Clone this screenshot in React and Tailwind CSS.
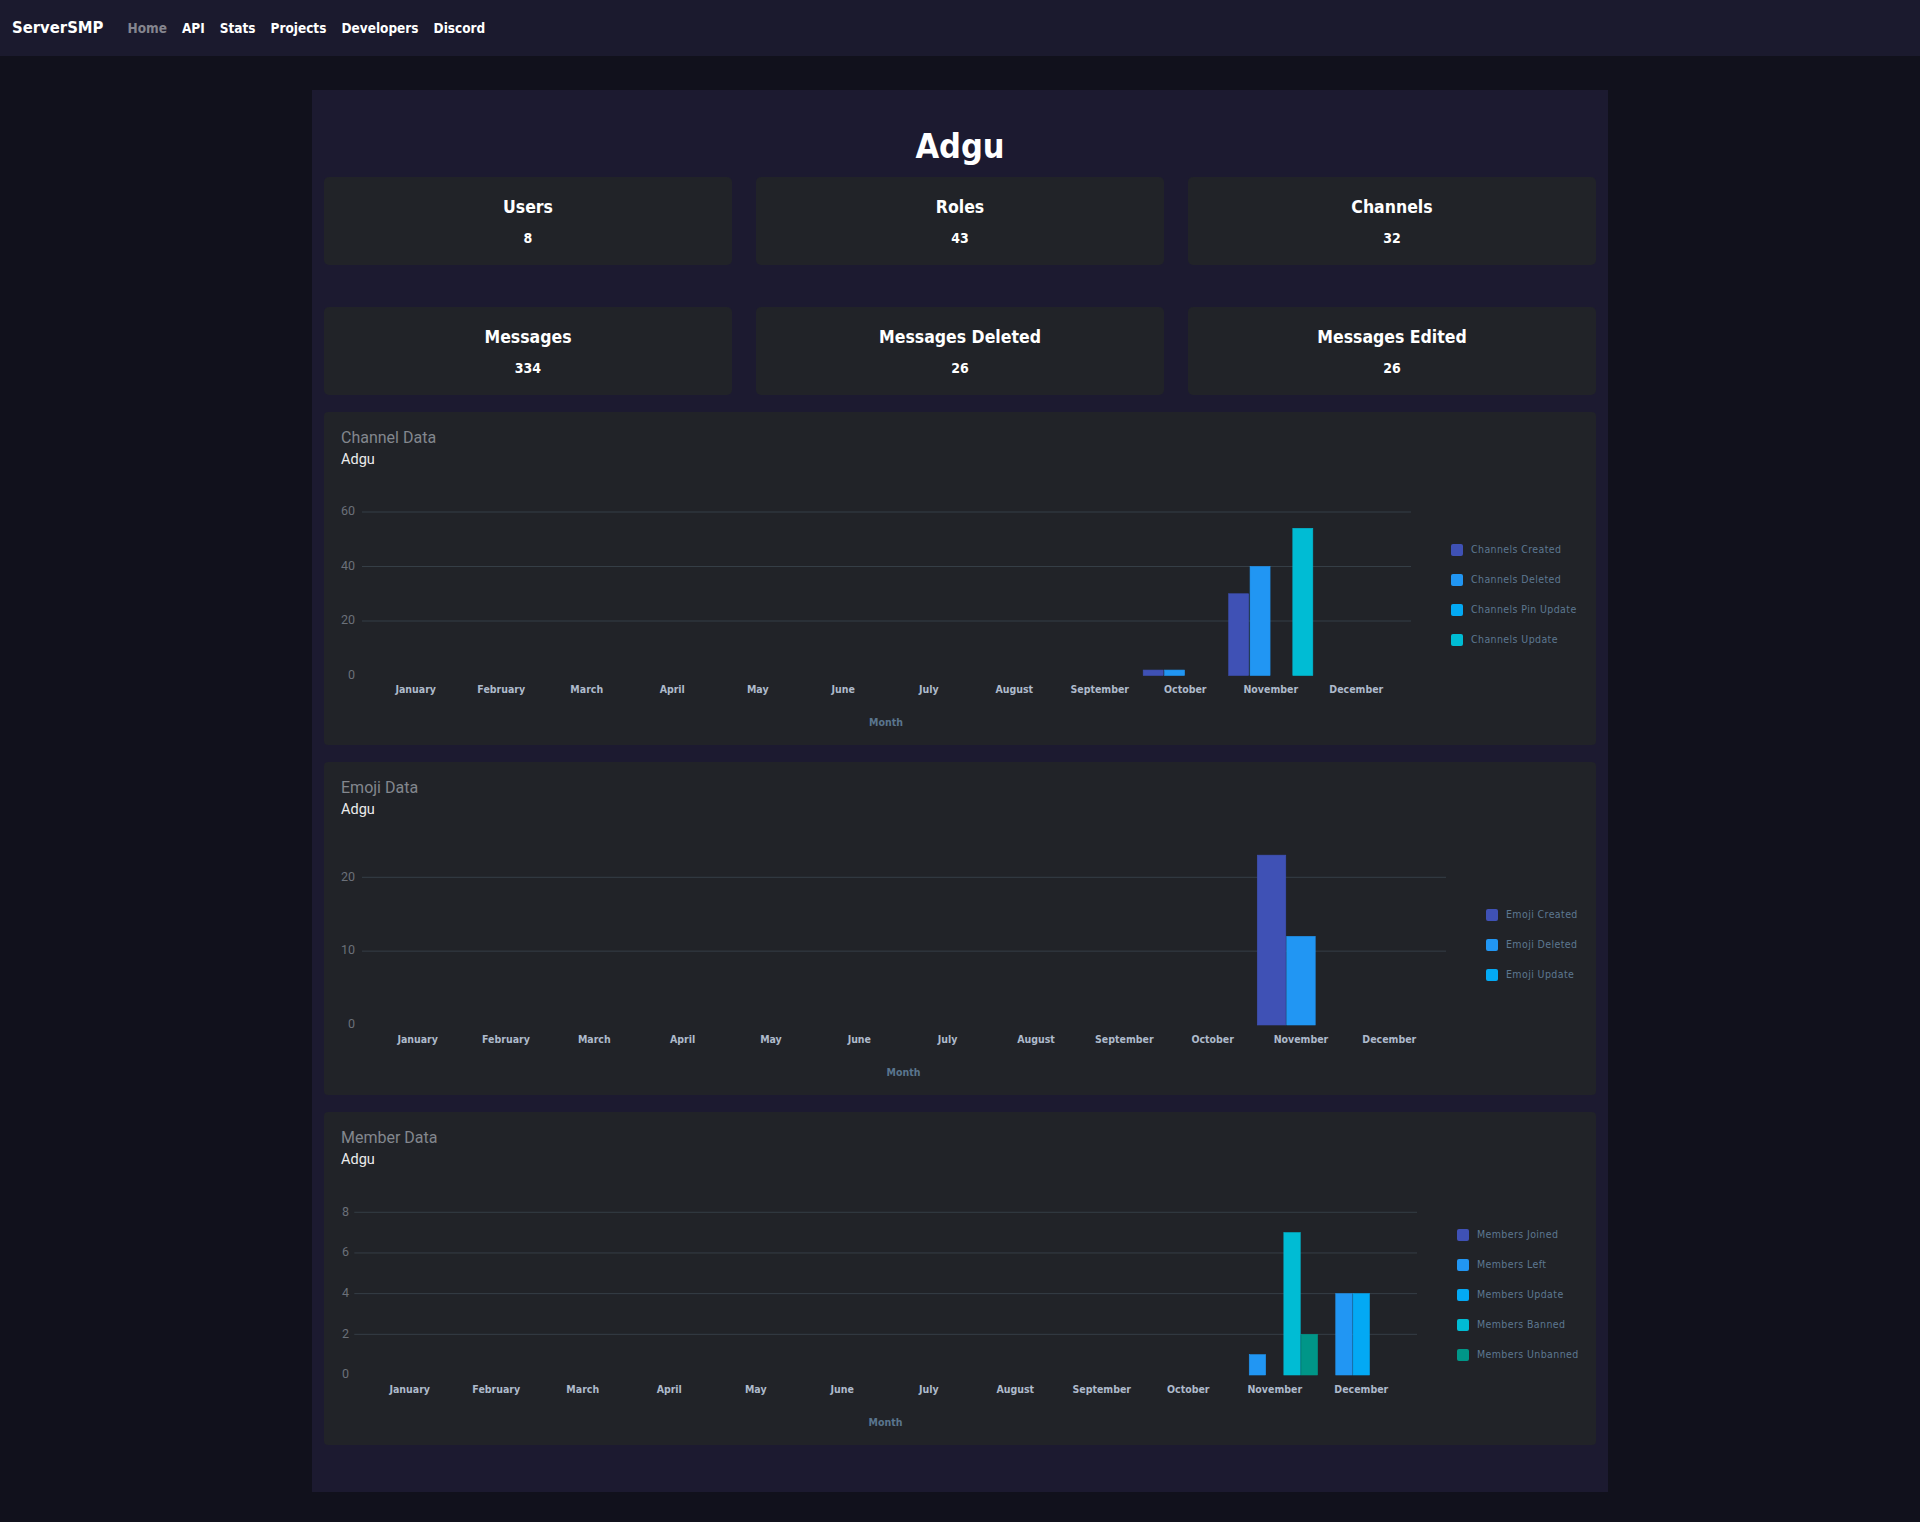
import React from "react";

const MONTHS = [
  "January",
  "February",
  "March",
  "April",
  "May",
  "June",
  "July",
  "August",
  "September",
  "October",
  "November",
  "December",
];

const zeros = () => Array(12).fill(0);
const withValues = (vals) => {
  const arr = zeros();
  Object.entries(vals).forEach(([k, v]) => (arr[k] = v));
  return arr;
};

const stats = [
  { label: "Users", value: 8 },
  { label: "Roles", value: 43 },
  { label: "Channels", value: 32 },
  { label: "Messages", value: 334 },
  { label: "Messages Deleted", value: 26 },
  { label: "Messages Edited", value: 26 },
];

const charts = [
  {
    title: "Channel Data",
    width: 1070,
    gridX0: 21,
    plotX0: 32,
    cat: 85.5,
    labelX: 14,
    ticks: [0, 20, 40, 60],
    unit: 2.725,
    base: 203.5,
    barW: 20,
    series: [
      { name: "Channels Created", color: "#3f51b5", data: withValues({ 9: 2, 10: 30 }) },
      { name: "Channels Deleted", color: "#2196f3", data: withValues({ 9: 2, 10: 40 }) },
      { name: "Channels Pin Update", color: "#03a9f4", data: zeros() },
      { name: "Channels Update", color: "#00bcd4", data: withValues({ 10: 54 }) },
    ],
  },
  {
    title: "Emoji Data",
    width: 1105,
    gridX0: 21,
    plotX0: 32.5,
    cat: 88.33,
    labelX: 14,
    ticks: [0, 10, 20],
    unit: 7.385,
    base: 203,
    barW: 28.5,
    series: [
      { name: "Emoji Created", color: "#3f51b5", data: withValues({ 10: 23 }) },
      { name: "Emoji Deleted", color: "#2196f3", data: withValues({ 10: 12 }) },
      { name: "Emoji Update", color: "#03a9f4", data: zeros() },
    ],
  },
  {
    title: "Member Data",
    width: 1076,
    gridX0: 13.3,
    plotX0: 25.5,
    cat: 86.5,
    labelX: 8,
    ticks: [0, 2, 4, 6, 8],
    unit: 20.34,
    base: 203,
    barW: 16.4,
    series: [
      { name: "Members Joined", color: "#3f51b5", data: zeros() },
      { name: "Members Left", color: "#2196f3", data: withValues({ 10: 1, 11: 4 }) },
      { name: "Members Update", color: "#03a9f4", data: withValues({ 11: 4 }) },
      { name: "Members Banned", color: "#00bcd4", data: withValues({ 10: 7 }) },
      { name: "Members Unbanned", color: "#009688", data: withValues({ 10: 2 }) },
    ],
  },
];

const BarChart = ({ chart }) => {
  const { width, gridX0, plotX0, cat, labelX, ticks, unit, base, barW, series } = chart;
  const slot = cat / series.length;
  const plotEnd = plotX0 + cat * 12;

  return (
    <svg width={width} height={270} className="shrink-0 font-['DejaVu_Sans_Condensed',sans-serif]">
      {ticks.map((t) => {
        const y = base - t * unit;
        return (
          <g key={t}>
            {t !== 0 && (
              <line x1={gridX0} x2={width} y1={y} y2={y} stroke="#353e46" strokeWidth="1" />
            )}
            <text
              x={labelX}
              y={y}
              textAnchor="end"
              dominantBaseline="middle"
              fill="#6b7079"
              fontSize="12.5"
              className="font-['Roboto',sans-serif]"
            >
              {t}
            </text>
          </g>
        );
      })}

      {series.map((s, si) =>
        s.data.map((v, mi) => {
          if (!v) return null;
          const x = plotX0 + mi * cat + si * slot + (slot - barW) / 2;
          const h = v * unit;
          return (
            <rect
              key={`${si}-${mi}`}
              x={x}
              y={base - h}
              width={barW}
              height={h}
              fill={s.color}
              stroke={s.color}
              strokeWidth="0.6"
            />
          );
        })
      )}

      {MONTHS.map((m, i) => (
        <text
          key={m}
          x={plotX0 + i * cat + cat / 2}
          y={218}
          textAnchor="middle"
          dominantBaseline="middle"
          fill="#aebacb"
          fontSize="10.5"
          fontWeight="700"
        >
          {m}
        </text>
      ))}

      <text
        x={(plotX0 + plotEnd) / 2}
        y={251}
        textAnchor="middle"
        dominantBaseline="middle"
        fill="#5a758e"
        fontSize="10.5"
        fontWeight="700"
      >
        Month
      </text>
    </svg>
  );
};

const ChartCard = ({ chart }) => (
  <div className="h-[333px] rounded-[4px] bg-[#212328] px-[17px] pt-[16px]">
    <div className="font-['Roboto',sans-serif] text-[16px] leading-[20px] text-[#83878e]">
      {chart.title}
    </div>
    <div className="mt-[2px] font-['Roboto',sans-serif] text-[14.5px] leading-[20px] text-[#ececec]">
      Adgu
    </div>
    <div className="mt-[2px] flex">
      <BarChart chart={chart} />
      <div className="ml-[40px] flex h-[246px] flex-col justify-center">
        {chart.series.map((s) => (
          <div key={s.name} className="flex h-[30px] items-center whitespace-nowrap">
            <span
              className="h-[12px] w-[12px] shrink-0 rounded-[2px]"
              style={{ backgroundColor: s.color }}
            ></span>
            <span className="ml-[8px] font-['DejaVu_Sans_Condensed',sans-serif] text-[10.5px] tracking-[0.4px] text-[#5d7891]">
              {s.name}
            </span>
          </div>
        ))}
      </div>
    </div>
  </div>
);

const App = () => {
  return (
    <div className="min-h-screen bg-[#11111c] pb-[30px] font-['DejaVu_Sans_Condensed',sans-serif]">
      {/* navbar */}
      <nav className="flex h-[56px] items-center bg-[#1b1a2e] px-[12px]">
        <span className="text-[16.5px] font-bold text-white">ServerSMP</span>
        <div className="ml-[24px] flex gap-[15px] text-[13.5px] font-bold">
          <span className="text-[#85858f]">Home</span>
          <span className="text-white">API</span>
          <span className="text-white">Stats</span>
          <span className="text-white">Projects</span>
          <span className="text-white">Developers</span>
          <span className="text-white">Discord</span>
        </div>
      </nav>

      <main className="mx-auto mt-[34px] w-[1296px] bg-[#1c1a30] px-[12px] pb-[47px] pt-[38px]">
        <h1 className="mb-[13px] text-center text-[34px] font-bold leading-[36px] text-white">
          Adgu
        </h1>

        {/* stat cards */}
        <div className="grid grid-cols-3 gap-x-[24px] gap-y-[42px]">
          {stats.map((s) => (
            <div
              key={s.label}
              className="flex h-[88px] flex-col items-center rounded-[5px] bg-[#212328] pt-[18px]"
            >
              <span className="text-[17.5px] font-bold leading-[24px] text-white">{s.label}</span>
              <span className="mt-[9px] text-[14px] font-bold leading-[20px] text-white">
                {s.value}
              </span>
            </div>
          ))}
        </div>

        {/* charts */}
        <div className="mt-[17px] flex flex-col gap-[17px]">
          {charts.map((c) => (
            <ChartCard key={c.title} chart={c} />
          ))}
        </div>
      </main>
    </div>
  );
};

export default App;
